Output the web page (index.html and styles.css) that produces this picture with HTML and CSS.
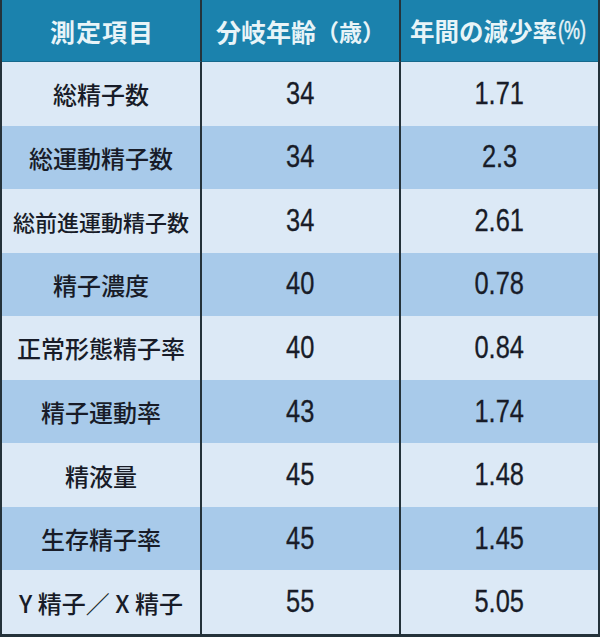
FILE: index.html
```html
<!DOCTYPE html>
<html lang="ja">
<head>
<meta charset="utf-8">
<link rel="stylesheet" href="styles.css">
</head>
<body>
<div class="table">
  <div class="row head">
    <div class="cell spaced">測定項目</div>
    <div class="cell">分岐年齢<span class="paren">（歳）</span></div>
    <div class="cell third">年間の減少率<span class="pct">(%)</span></div>
  </div>
  <div class="row">
    <div class="cell name">総精子数</div>
    <div class="cell num"><span>34</span></div>
    <div class="cell num"><span>1.71</span></div>
  </div>
  <div class="row alt">
    <div class="cell name">総運動精子数</div>
    <div class="cell num"><span>34</span></div>
    <div class="cell num"><span>2.3</span></div>
  </div>
  <div class="row">
    <div class="cell name long">総前進運動精子数</div>
    <div class="cell num"><span>34</span></div>
    <div class="cell num"><span>2.61</span></div>
  </div>
  <div class="row alt">
    <div class="cell name">精子濃度</div>
    <div class="cell num"><span>40</span></div>
    <div class="cell num"><span>0.78</span></div>
  </div>
  <div class="row">
    <div class="cell name">正常形態精子率</div>
    <div class="cell num"><span>40</span></div>
    <div class="cell num"><span>0.84</span></div>
  </div>
  <div class="row alt">
    <div class="cell name">精子運動率</div>
    <div class="cell num"><span>43</span></div>
    <div class="cell num"><span>1.74</span></div>
  </div>
  <div class="row">
    <div class="cell name">精液量</div>
    <div class="cell num"><span>45</span></div>
    <div class="cell num"><span>1.48</span></div>
  </div>
  <div class="row alt">
    <div class="cell name">生存精子率</div>
    <div class="cell num"><span>45</span></div>
    <div class="cell num"><span>1.45</span></div>
  </div>
  <div class="row">
    <div class="cell name">Y 精子／ X 精子</div>
    <div class="cell num"><span>55</span></div>
    <div class="cell num"><span>5.05</span></div>
  </div>
</div>
</body>
</html>
```
FILE: styles.css
```css
html, body {
  margin: 0;
  padding: 0;
  background: #ffffff;
}
.table {
  width: 600px;
  height: 637px;
  box-sizing: border-box;
  display: grid;
  grid-template-columns: 200px 199px 1fr;
  grid-template-rows: 62px repeat(9, 1fr);
  border-left: 2px solid #24323a;
  border-right: 2px solid #24323a;
  border-bottom: 3px solid #24323a;
  font-family: "Noto Sans CJK JP", "Noto Sans", sans-serif;
  color: #181c28;
}
.row {
  display: contents;
}
.cell {
  display: flex;
  align-items: center;
  justify-content: center;
  background: #dce9f6;
  white-space: nowrap;
}
.row .cell:not(:last-child) {
  border-right: 2px solid #24323a;
}
.row.alt .cell {
  background: #a8caea;
}
.head .cell {
  background: #1b82ad;
  color: #e8f4f8;
  font-weight: 700;
  font-size: 25px;
  border-bottom: 1px solid #16698c;
}
.head .spaced {
  letter-spacing: 1px;
  padding-left: 2px;
}
.head .paren {
  font-size: 23px;
}
.head .third {
  font-size: 24.5px;
  padding-right: 3px;
}
.head .pct {
  display: inline-block;
  font-family: "Liberation Sans", Arial, sans-serif;
  font-size: 25px;
  font-weight: 400;
  -webkit-text-stroke: 0.5px #e8f4f8;
  transform: scaleX(0.72);
  transform-origin: left center;
  margin-right: -11px;
  margin-left: 1px;
}
.name {
  font-size: 24px;
  font-weight: 500;
}
.name.long {
  font-size: 22px;
}
.num span {
  display: inline-block;
  font-family: "Liberation Sans", Arial, sans-serif;
  font-size: 31px;
  -webkit-text-stroke: 0.3px #181c28;
  transform: scaleX(0.82);
}
```
